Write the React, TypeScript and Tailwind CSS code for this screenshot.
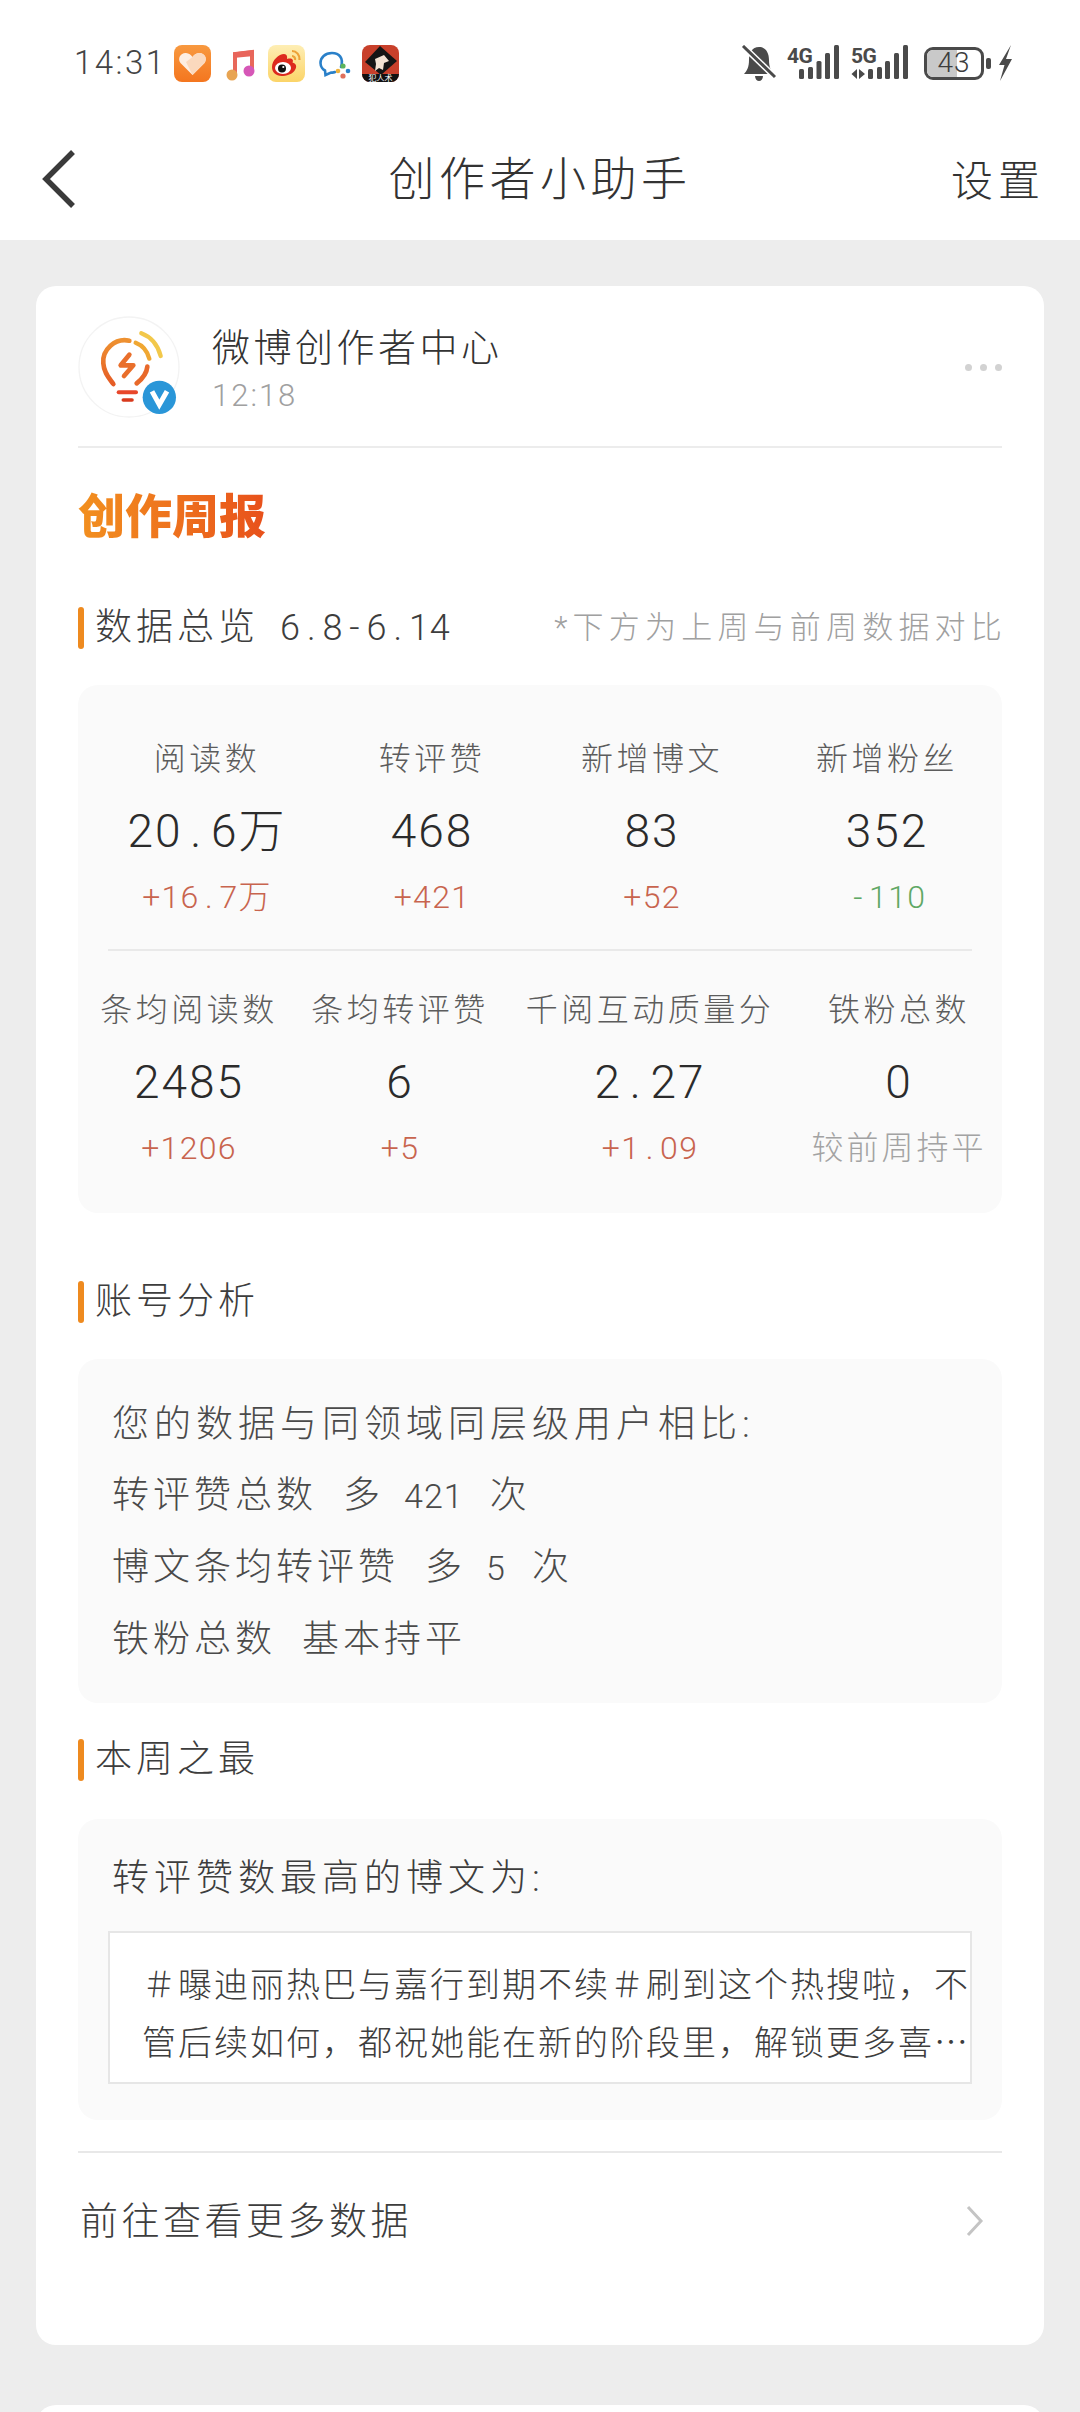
const cjk = "font-['Roboto','Noto_Sans_CJK_SC',sans-serif]";

const rowOne = [
  { label: "阅读数", value: "20.6万", delta: "+16.7万", tone: "text-[#c8644e]", width: "w-[254px]" },
  { label: "转评赞", value: "468", delta: "+421", tone: "text-[#c8644e]", width: "w-[196px]" },
  { label: "新增博文", value: "83", delta: "+52", tone: "text-[#c8644e]", width: "w-[244px]" },
  { label: "新增粉丝", value: "352", delta: "-110", tone: "text-[#5fa865]", width: "w-[226px]" },
];

const rowTwo = [
  { label: "条均阅读数", value: "2485", delta: "+1206", tone: "text-[#c8644e]", width: "w-[218px]" },
  { label: "条均转评赞", value: "6", delta: "+5", tone: "text-[#c8644e]", width: "w-[204px]" },
  { label: "千阅互动质量分", value: "2.27", delta: "+1.09", tone: "text-[#c8644e]", width: "w-[296px]" },
  { label: "铁粉总数", value: "0", delta: "较前周持平", tone: "text-[#a3a3a3] tracking-[3px]", width: "w-[202px]" },
];

type Metric = (typeof rowOne)[number];

// the screenshot's digit font gives "." and "-" a full digit cell
function Num({ text }: { text: string }) {
  return (
    <>
      {text.split(/([.-])/).map((part, i) =>
        part === "." || part === "-" ? (
          <span key={i} className="mx-[0.17em]">
            {part}
          </span>
        ) : (
          <span key={i}>{part}</span>
        ),
      )}
    </>
  );
}

function MetricRow({ items }: { items: Metric[] }) {
  return (
    <div className="flex px-[2px]">
      {items.map((m) => (
        <div key={m.label} className={`${m.width} flex flex-col items-center whitespace-nowrap`}>
          <div className="h-[40px] text-[32px] leading-[40px] tracking-[3.5px] font-light text-[#5c5c5c]">{m.label}</div>
          <div className="mt-[27px] h-[50px] text-[46px] leading-[50px] tracking-[2px] font-light text-[#2b2b2b]">
            <Num text={m.value} />
          </div>
          <div className={`mt-[21px] h-[40px] text-[32px] leading-[40px] tracking-[1.3px] font-light ${m.tone}`}>
            <Num text={m.delta} />
          </div>
        </div>
      ))}
    </div>
  );
}

function SectionHead({ title, className = "" }: { title: string; className?: string }) {
  return (
    <div className={`flex h-[42px] items-center gap-[11px] ${className}`}>
      <span className="h-full w-[6px] rounded-full bg-[#ee8a1f]" />
      <span className="text-[37px] leading-[42px] tracking-[4px] font-light text-[#3d3d3d]">{title}</span>
    </div>
  );
}

function StatusIcons() {
  return (
    <div className="flex gap-[10px]">
      {/* vitality heart */}
      <svg width="37" height="37" viewBox="0 0 37 37">
        <defs>
          <linearGradient id="hb" x1="0" y1="0" x2="0" y2="1">
            <stop offset="0" stopColor="#f8993f" />
            <stop offset="1" stopColor="#f4761f" />
          </linearGradient>
        </defs>
        <rect width="37" height="37" rx="8" fill="url(#hb)" />
        <path d="M18.5 30 L6.5 18 C3 13 7 7.5 12 8 C15 8.2 17 10 18.5 12 C20 10 22 8.2 25 8 C30 7.5 34 13 30.5 18 Z" fill="#fdeee2" />
        <path d="M18.5 30 L12 17 L18.5 12 C20 10 22 8.2 25 8 C30 7.5 34 13 30.5 18 Z" fill="#fbd9bd" />
      </svg>
      {/* music */}
      <svg width="37" height="37" viewBox="0 0 37 37">
        <path d="M14 30 V9 L31 7 V26" fill="none" stroke="#e8685a" strokeWidth="4" />
        <path d="M12 7.5 L33 5 V11 L12 13 Z" fill="#e8655b" />
        <circle cx="11" cy="30" r="5.5" fill="#e8a452" />
        <circle cx="28" cy="26" r="5.5" fill="#d657b7" />
      </svg>
      {/* weibo */}
      <svg width="37" height="37" viewBox="0 0 37 37">
        <defs>
          <linearGradient id="wb" x1="0" y1="0" x2="0" y2="1">
            <stop offset="0" stopColor="#feeeb4" />
            <stop offset="1" stopColor="#fbd468" />
          </linearGradient>
        </defs>
        <rect width="37" height="37" rx="8" fill="url(#wb)" />
        <path d="M4 22 C4 15 11 9 16 9 C19 9 19.5 12 19 14 C24 12.5 26 15 24.5 17.5 C28 18.5 29 21 27.5 24 C25 29.5 18 31 13.5 31 C8 31 4 27.5 4 22 Z" fill="#dd2a1e" />
        <ellipse cx="15" cy="23" rx="8" ry="6" fill="#fff" />
        <circle cx="14" cy="23.5" r="4" fill="#111" />
        <circle cx="15.3" cy="22" r="1.1" fill="#fff" />
        <path d="M24 6 C28.5 6 32 10 31.5 15" fill="none" stroke="#eda238" strokeWidth="2.2" />
        <path d="M24 11 C26 11 27.5 13 27 15" fill="none" stroke="#eda238" strokeWidth="2.2" />
      </svg>
      {/* chat */}
      <svg width="37" height="37" viewBox="0 0 37 37">
        <path d="M26 22 C29 13 24 8 17 8 C10 8 5.5 12.5 5.5 18 C5.5 21.5 8 24.5 10 25.5 L10.5 30 L16 27.5 C17.5 27.8 19 27.5 20 27" fill="none" stroke="#2a80c9" strokeWidth="2.6" strokeLinecap="round" />
        <circle cx="28" cy="21" r="2.6" fill="#5cb45c" />
        <circle cx="33" cy="26" r="2.3" fill="#2a80c9" />
        <circle cx="23" cy="26" r="2.3" fill="#efb23c" />
        <circle cx="28" cy="31" r="2.6" fill="#e0705c" />
      </svg>
      {/* game */}
      <svg width="37" height="37" viewBox="0 0 37 37">
        <rect width="37" height="37" rx="8" fill="#c8402b" />
        <path d="M0 29 H37 V29 A8 8 0 0 1 29 37 H8 A8 8 0 0 1 0 29 Z" fill="#111" />
        <path d="M18 1 L35 16 L19 30 L3 17 Z" fill="#151515" />
        <path d="M13 14 L22 10 L27 16 L22 18 L21 25 L17 23 L13 26 L14 19 Z" fill="#f3e3d4" />
        <text x="18.5" y="35.5" textAnchor="middle" fontSize="8" fill="#fff" fontFamily="Noto Sans CJK SC">犯人术</text>
      </svg>
    </div>
  );
}

function SignalBars({ label, arrows }: { label: string; arrows?: boolean }) {
  const bars = arrows ? [17, 26, 34, 43, 52] : [12, 21, 29.5, 38, 47];
  const tops = [24, 22, 16, 8, 0];
  return (
    <div className={`relative h-[37px] ${arrows ? "w-[58px]" : "w-[53px]"}`}>
      <span className="absolute left-0 top-[1px] text-[21px] leading-[20px] font-bold tracking-[-0.5px] text-[#4a4a4a]">{label}</span>
      <svg width={arrows ? 58 : 53} height="37" viewBox={`0 0 ${arrows ? 58 : 53} 37`}>
        {arrows && <path d="M0.5 29 L6 24 V34 Z M8 24 L14 29 L8 34 Z" fill="#4a4a4a" />}
        {bars.map((x, i) => (
          <rect key={x} x={x} y={tops[i]} width="5" height={34 - tops[i]} rx="1.5" fill="#4a4a4a" />
        ))}
      </svg>
    </div>
  );
}

export default function App() {
  return (
    <div className={`${cjk} h-[2412px] w-[1080px] overflow-hidden bg-[#ededed]`}>
      {/* status bar */}
      <div className="flex h-[126px] items-center justify-between bg-white pl-[74px] pr-[67px]">
        <div className="flex items-center">
          <span className="w-[100px] text-[33px] tracking-[2.5px] font-light text-[#444]">14:31</span>
          <StatusIcons />
        </div>
        <div className="flex items-center">
          <svg width="36" height="37" viewBox="0 0 36 37">
            <path d="M18 2 C25 2 28 8 28 15 C28 22 30 26 33 29 H3 C6 26 8 22 8 15 C8 8 11 2 18 2 Z" fill="#4a4a4a" />
            <path d="M14 31 H22 C22 34 20 36 18 36 C16 36 14 34 14 31 Z" fill="#4a4a4a" />
            <path d="M3 2 L35 33" stroke="#fff" strokeWidth="6" />
            <path d="M2 1 L34 32" stroke="#4a4a4a" strokeWidth="3" />
          </svg>
          <div className="ml-[10px]">
            <SignalBars label="4G" />
          </div>
          <div className="ml-[11px]">
            <SignalBars label="5G" arrows />
          </div>
          {/* battery */}
          <div className="relative ml-[15px] flex h-[33px] w-[60px] items-center justify-center overflow-hidden rounded-[9px] border-[3px] border-[#4a4a4a]">
            <span className="absolute inset-y-0 left-0 w-[30px] bg-[#c9c9c9]" />
            <span className="relative text-[28px] leading-none font-light tracking-[1px] text-[#3d3d3d]">43</span>
          </div>
          <span className="ml-[2px] h-[11px] w-[5px] rounded-[2px] bg-[#4a4a4a]" />
          <svg className="ml-[7px]" width="15" height="37" viewBox="0 0 15 37">
            <path d="M13 0 L1 20 H6.5 L2 36 L14 14 H8 Z" fill="#4a4a4a" />
          </svg>
        </div>
      </div>

      {/* nav */}
      <header className="grid h-[114px] grid-cols-[1fr_auto_1fr] items-center bg-white pb-[8px]">
        <svg className="ml-[40px]" width="38" height="60" viewBox="0 0 38 60">
          <path d="M33 3 L6 30 L33 57" fill="none" stroke="#3a3a3a" strokeWidth="5.5" />
        </svg>
        <h1 className="text-[46px] leading-none tracking-[4.5px] font-light text-[#333]">创作者小助手</h1>
        <button className="mt-[6px] justify-self-end pr-[35px] text-[42px] leading-none tracking-[5px] font-light text-[#333]">设置</button>
      </header>

      <main className="px-[36px] pt-[46px]">
        <section className="h-[2059px] rounded-[20px] bg-white px-[42px] pt-[30px]">
          {/* author */}
          <div className="flex h-[102px] items-center">
            <svg width="102" height="102" viewBox="24 18 306 306">
              <defs>
                <linearGradient id="bulb" x1="0" y1="0" x2="0" y2="1">
                  <stop offset="0" stopColor="#ee9130" />
                  <stop offset="1" stopColor="#e55c26" />
                </linearGradient>
              </defs>
              <circle cx="177" cy="171" r="150" fill="#fff" stroke="#f3f3f3" strokeWidth="4" />
              <path d="M178 92 C135 82 96 120 100 160 C102 190 118 205 130 222" fill="none" stroke="url(#bulb)" strokeWidth="14" strokeLinecap="round" />
              <path d="M200 220 C215 208 230 192 232 170" fill="none" stroke="#e8692a" strokeWidth="14" strokeLinecap="round" />
              <path d="M197 98 C218 106 232 122 238 146" fill="none" stroke="#f0a732" strokeWidth="13" strokeLinecap="round" />
              <path d="M214 70 C246 82 264 108 272 138" fill="none" stroke="#f2c84a" strokeWidth="13" strokeLinecap="round" />
              <path d="M178 134 L152 166 H190 L162 198" fill="none" stroke="#e96f2b" strokeWidth="14" strokeLinejoin="round" strokeLinecap="round" />
              <path d="M146 247 H198" stroke="#e8472b" strokeWidth="12" strokeLinecap="round" />
              <path d="M160 270 H186" stroke="#d83a1d" strokeWidth="11" strokeLinecap="round" />
              <circle cx="268" cy="262" r="50" fill="#2a96d8" />
              <path d="M246 244 L268 284 L291 244" fill="none" stroke="#fff" strokeWidth="15" />
            </svg>
            <div className="ml-[32px] flex-1 pt-[6px]">
              <div className="h-[52px] text-[38px] leading-[52px] tracking-[3.5px] font-light text-[#333]">微博创作者中心</div>
              <div className="text-[31px] leading-[44px] tracking-[2px] font-light text-[#a0a0a0]">12:18</div>
            </div>
            <div className="flex gap-[8px]">
              <span className="h-[7px] w-[7px] rounded-full bg-[#d2d2d2]" />
              <span className="h-[7px] w-[7px] rounded-full bg-[#d2d2d2]" />
              <span className="h-[7px] w-[7px] rounded-full bg-[#d2d2d2]" />
            </div>
          </div>
          <div className="mt-[28px] h-[2px] bg-[#ececec]" />

          <h2 className="mt-[41px] h-[56px] w-fit bg-gradient-to-r from-[#f2901f] to-[#e8501b] bg-clip-text text-[47px] leading-[56px] font-black text-transparent">
            创作周报
          </h2>

          {/* overview */}
          <div className="mt-[62px] flex h-[42px] items-center justify-between">
            <div className="flex h-[42px] items-center gap-[11px]">
              <span className="h-full w-[6px] rounded-full bg-[#ee8a1f]" />
              <span className="text-[37px] leading-[42px] tracking-[4px] font-light text-[#3d3d3d]">数据总览</span>
              <span className="ml-[10px] text-[36px] leading-[42px] tracking-[0.8px] font-light text-[#3d3d3d]">
                <Num text="6.8-6.14" />
              </span>
            </div>
            <span className="mr-[-5px] text-[31px] leading-[42px] tracking-[5.2px] font-light text-[#a0a0a0]">*下方为上周与前周数据对比</span>
          </div>
          <div className="mt-[36px] h-[528px] rounded-[20px] bg-[#fafafa] pt-[54px]">
            <MetricRow items={rowOne} />
            <div className="mx-[30px] mb-[39px] mt-[32px] h-[2px] bg-[#e9e9e9]" />
            <MetricRow items={rowTwo} />
          </div>

          {/* account */}
          <SectionHead title="账号分析" className="mt-[68px]" />
          <div className="mt-[36px] h-[344px] rounded-[20px] bg-[#fafafa] px-[34px] pt-[30px] text-[37px] leading-[71px] tracking-[4px] font-light text-[#4a4a4a]">
            <p className="tracking-[5px]">您的数据与同领域同层级用户相比:</p>
            <p className="whitespace-pre">
              转评赞总数  多 <span className="ml-[7px] text-[34px] tracking-[1px]">421</span>  次
            </p>
            <p className="whitespace-pre">
              博文条均转评赞  多 <span className="ml-[7px] text-[34px] tracking-[1px]">5</span>  次
            </p>
            <p className="whitespace-pre">铁粉总数  基本持平</p>
          </div>

          {/* best */}
          <SectionHead title="本周之最" className="mt-[36px]" />
          <div className="mt-[38px] h-[301px] rounded-[20px] bg-[#fafafa] px-[30px] pt-[38px]">
            <p className="pl-[4px] text-[37px] leading-[44px] tracking-[5px] font-light text-[#3d3d3d]">转评赞数最高的博文为:</p>
            <div className="mt-[30px] h-[153px] border-2 border-[#e6e6e6] bg-white pl-[32px] pt-[21px] font-['Noto_Sans_CJK_SC',sans-serif] text-[34px] leading-[58px] tracking-[2px] font-light text-[#3d3d3d]">
              {"\uFF03曝迪丽热巴与嘉行到期不续\uFF03刷到这个热搜啦\uFF0C不管后续如何\uFF0C都祝她能在新的阶段里\uFF0C解锁更多喜\u2026"}
            </div>
          </div>
          <div className="mt-[31px] h-[2px] bg-[#e8e8e8]" />

          <div className="flex h-[136px] items-center justify-between pl-[2px] pr-[18px]">
            <span className="text-[38px] tracking-[3.5px] font-light text-[#3d3d3d]">前往查看更多数据</span>
            <svg width="18" height="32" viewBox="0 0 18 32">
              <path d="M2 2 L15 16 L2 30" fill="none" stroke="#c4c4c4" strokeWidth="3" />
            </svg>
          </div>
        </section>

        {/* next card peeking in */}
        <div className="mt-[60px] h-[40px] rounded-t-[20px] bg-white" />
      </main>
    </div>
  );
}
